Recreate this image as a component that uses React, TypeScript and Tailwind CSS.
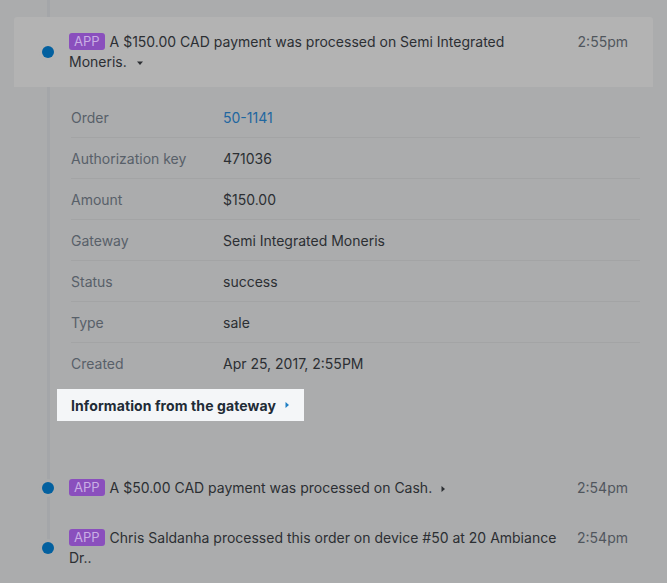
import React from 'react';

const details = [
  { label: 'Order', value: '50-1141', link: true },
  { label: 'Authorization key', value: '471036' },
  { label: 'Amount', value: '$150.00' },
  { label: 'Gateway', value: 'Semi Integrated Moneris' },
  { label: 'Status', value: 'success' },
  { label: 'Type', value: 'sale' },
  { label: 'Created', value: 'Apr 25, 2017, 2:55PM' },
];

function AppBadge() {
  return (
    <span className="mr-[5px] inline-block rounded-[3px] bg-[#8a4fbd] px-[5px] align-top text-[13px] leading-[17px] text-[#c9aee4] mt-[1px]">
      APP
    </span>
  );
}

function CaretDown() {
  return (
    <svg className="ml-[9px] inline-block align-middle" width="8" height="5" viewBox="0 0 8 5">
      <path d="M1 0.5h6L4 4z" fill="#2c2f33" />
    </svg>
  );
}

function CaretRight({ color = '#2c2f33' }: { color?: string }) {
  return (
    <svg className="ml-[9px] inline-block align-middle" width="5" height="8" viewBox="0 0 5 8">
      <path d="M0.5 1v6L4 4z" fill={color} />
    </svg>
  );
}

function Event({
  children,
  time,
  highlighted,
}: {
  children: React.ReactNode;
  time: string;
  highlighted?: boolean;
}) {
  return (
    <div
      className={
        'mx-[14px] flex items-center py-[15px] pr-[25px] ' +
        (highlighted ? 'rounded-t-[3px] bg-[#b3b3b3]' : '')
      }
    >
      <div className="ml-[28px] mr-[15px] shrink-0">
        <div
          className={
            'h-3 w-3 rounded-full bg-[#03609f] ring-[3px] ' +
            (highlighted ? 'ring-[#b3b3b3]' : 'ring-[#abacad]')
          }
        />
      </div>
      <div className="flex flex-1 items-start justify-between">
        <div className="max-w-[488px] text-[14px] leading-[20px] text-[#2c2f33]">{children}</div>
        <div className="ml-4 shrink-0 text-[14px] leading-[20px] text-[#50565d]">{time}</div>
      </div>
    </div>
  );
}

export default function App() {
  return (
    <div className="relative min-h-screen overflow-hidden bg-[#abacad] font-['Inter',sans-serif]">
      {/* timeline rail */}
      <div className="absolute left-[47px] top-0 h-[545px] w-[3px] bg-[#a4a6a9]" />

      <div className="relative pt-[17px]">
        <Event time="2:55pm" highlighted>
          <AppBadge />A $150.00 CAD payment was processed on Semi Integrated Moneris.
          <CaretDown />
        </Event>

        <div className="ml-[71px] mr-[27px] pt-[10px]">
          {details.map((d, i) => (
            <div
              key={d.label}
              className={
                'flex h-[41px] items-center text-[14px] ' +
                (i < details.length - 1 ? 'border-b border-[#a3a4a5]' : '')
              }
            >
              <div className="w-[152px] text-[#586069]">{d.label}</div>
              <div className={d.link ? 'text-[#1f67a0]' : 'text-[#2c2f33]'}>{d.value}</div>
            </div>
          ))}
        </div>

        <div className="ml-[57px] mt-[5px] inline-flex h-[32px] items-center bg-[#f4f6f8] px-[14px] text-[14px] font-bold tracking-[0.1px] text-[#212b36]">
          Information from the gateway
          <CaretRight color="#1f7fc4" />
        </div>

        <div className="mt-[42px]">
          <Event time="2:54pm">
            <AppBadge />A $50.00 CAD payment was processed on Cash.
            <CaretRight />
          </Event>
          <Event time="2:54pm">
            <AppBadge />Chris Saldanha processed this order on device #50 at 20 Ambiance Dr..
          </Event>
        </div>
      </div>
    </div>
  );
}
